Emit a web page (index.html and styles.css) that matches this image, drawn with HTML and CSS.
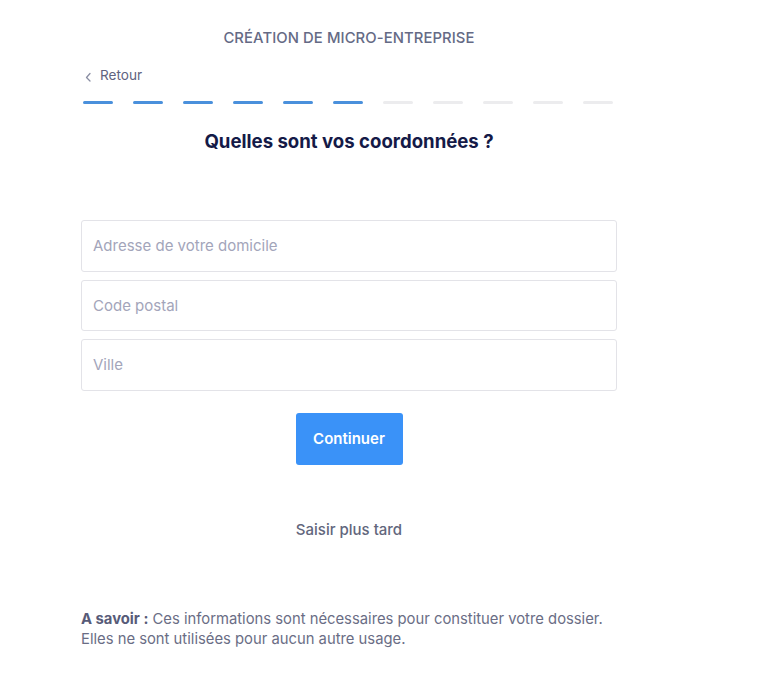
FILE: index.html
```html
<!DOCTYPE html>
<html lang="fr">
<head>
<meta charset="utf-8">
<title>Création de micro-entreprise</title>
<link rel="stylesheet" href="styles.css">
</head>
<body>
<main class="page">
  <header class="top">
    <div class="eyebrow">CRÉATION DE MICRO-ENTREPRISE</div>
    <a class="back" href="#">
      <svg class="chev" width="8" height="10" viewBox="0 0 8 10"><path d="M6 1.5 L2.5 5.5 L6 9" fill="none" stroke="#8a8ea3" stroke-width="1.3" stroke-linecap="round" stroke-linejoin="round"/></svg>
      <span>Retour</span>
    </a>
    <div class="steps">
      <span class="step on"></span><span class="step on"></span><span class="step on"></span><span class="step on"></span><span class="step on"></span><span class="step on"></span>
      <span class="step"></span><span class="step"></span><span class="step"></span><span class="step"></span><span class="step"></span>
    </div>
  </header>
  <h1 class="title">Quelles sont vos coordonnées ?</h1>
  <form class="form">
    <input class="field" type="text" placeholder="Adresse de votre domicile">
    <input class="field" type="text" placeholder="Code postal">
    <input class="field" type="text" placeholder="Ville">
    <button class="btn" type="button">Continuer</button>
    <a class="later" href="#">Saisir plus tard</a>
  </form>
  <p class="note"><strong>A savoir :</strong> Ces informations sont nécessaires pour constituer votre dossier.<br>Elles ne sont utilisées pour aucun autre usage.</p>
</main>
</body>
</html>
```

FILE: styles.css
```css
* { box-sizing: border-box; }
html, body { margin: 0; padding: 0; background: #fff; }
body { font-family: Inter, "Noto Sans", sans-serif; color: #1b1f4b; }
.page { width: 536px; margin-left: 81px; padding-top: 29px; }
.top { display: flex; flex-direction: column; }
.eyebrow { text-align: center; font-size: 14.8px; font-weight: 500; color: #656a85; line-height: 18px; letter-spacing: 0.1px; }
.back { display: flex; align-items: center; gap: 8px; margin-top: 20px; margin-left: 3px; text-decoration: none; color: #5f6380; font-size: 13.6px; line-height: 16px; }
.chev { margin-top: 4px; }
.steps { display: flex; gap: 20px; margin-top: 18px; margin-left: 2px; }
.step { width: 30px; height: 3px; border-radius: 2px; background: #ececee; }
.step.on { background: #4a90dc; }
.title { margin: 25px 0 0; text-align: center; font-size: 18.6px; font-weight: 700; color: #141a47; line-height: 24px; }
.form { display: flex; flex-direction: column; align-items: center; gap: 8px; margin-top: 67px; }
.field { width: 100%; height: 51.5px; border: 1px solid #e3e3e8; border-radius: 3px; padding: 0 11px; font-family: inherit; font-size: 15px; color: #1b1f4b; background: #fff; outline: none; }
.field::placeholder { color: #a3a5ba; }
.btn { margin-top: 14px; width: 107px; height: 52px; border: 0; border-radius: 3px; background: #3a92f8; color: #fff; font-family: inherit; font-size: 15px; font-weight: 600; cursor: pointer; }
.later { margin-top: 47px; color: #62667c; font-size: 15px; font-weight: 500; text-decoration: none; line-height: 20px; }
.note { margin: 69px 0 0; font-size: 14.8px; line-height: 20px; color: #6a6d85; }
.note strong { color: #575b78; font-weight: 700; }
```
